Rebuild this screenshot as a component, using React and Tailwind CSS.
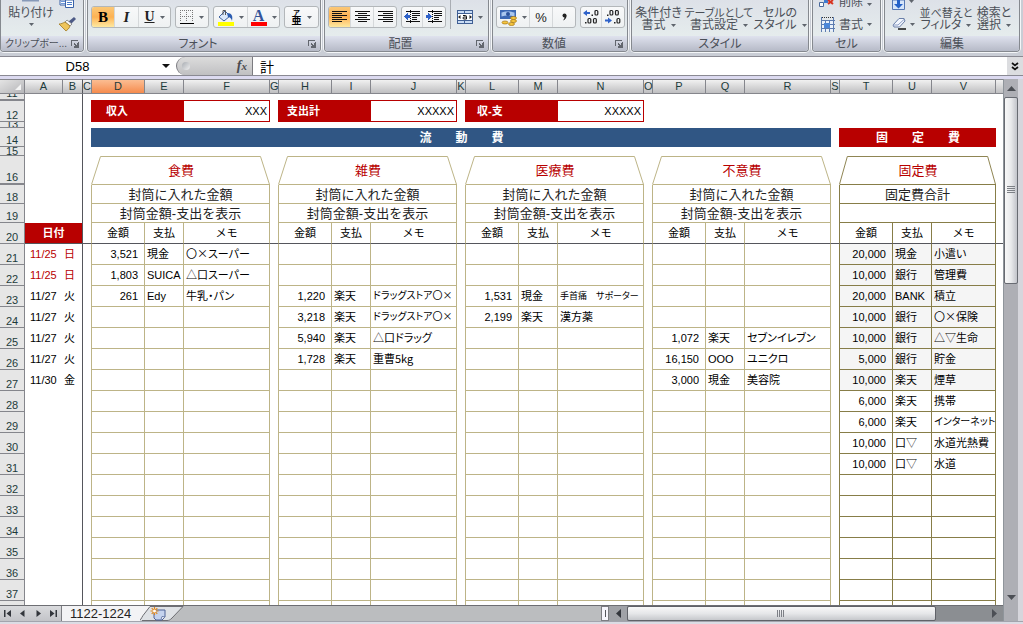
import React, { useState } from 'react';

const columns = [
  ['A', 'w-[38px]'], ['B', 'w-[20px]'], ['C', 'w-[9px]'],
  ['D', 'w-[53px]'], ['E', 'w-[39px]'], ['F', 'w-[86px]'], ['G', 'w-[9px]'],
  ['H', 'w-[53px]'], ['I', 'w-[39px]'], ['J', 'w-[86px]'], ['K', 'w-[9px]'],
  ['L', 'w-[53px]'], ['M', 'w-[39px]'], ['N', 'w-[86px]'], ['O', 'w-[9px]'],
  ['P', 'w-[53px]'], ['Q', 'w-[39px]'], ['R', 'w-[86px]'], ['S', 'w-[9px]'],
  ['T', 'w-[53px]'], ['U', 'w-[39px]'], ['V', 'w-[64px]'],
];

const groups = ['食費', '雑費', '医療費', '不意費', '固定費'];
const FIXED = 4;

const dates = {
  21: ['11/25', '日'], 22: ['11/25', '日'], 23: ['11/27', '火'], 24: ['11/27', '火'],
  25: ['11/27', '火'], 26: ['11/27', '火'], 27: ['11/30', '金'],
};

// one object per group, keyed by row number
const entries = [
  {
    21: ['3,521', '現金', '〇×スーパー'],
    22: ['1,803', 'SUICA', '△口スーパー'],
    23: ['261', 'Edy', '牛乳・パン'],
  },
  {
    23: ['1,220', '楽天', 'ドラッグストア〇×'],
    24: ['3,218', '楽天', 'ドラッグストア〇×'],
    25: ['5,940', '楽天', '△口ドラッグ'],
    26: ['1,728', '楽天', '重曹5kg'],
  },
  {
    23: ['1,531', '現金', '手首痛　サポーター'],
    24: ['2,199', '楽天', '漢方薬'],
  },
  {
    25: ['1,072', '楽天', 'セブンイレブン'],
    26: ['16,150', 'OOO', 'ユニクロ'],
    27: ['3,000', '現金', '美容院'],
  },
  {
    21: ['20,000', '現金', '小遣い'],
    22: ['10,000', '銀行', '管理費'],
    23: ['20,000', 'BANK', '積立'],
    24: ['10,000', '銀行', '〇×保険'],
    25: ['10,000', '銀行', '△▽生命'],
    26: ['5,000', '銀行', '貯金'],
    27: ['10,000', '楽天', '煙草'],
    28: ['6,000', '楽天', '携帯'],
    29: ['6,000', '楽天', 'インターネット'],
    30: ['10,000', '口▽', '水道光熱費'],
    31: ['10,000', '口▽', '水道'],
  },
];

const bodyRows = Array.from({ length: 18 }, (_, i) => 21 + i);

const lineColor = g => (g === FIXED ? 'border-[#877d48]' : 'border-[#bdb487]');

const memoSize = memo => {
  if (!memo) return 'text-[11px]';
  if (memo.startsWith('手首痛')) return 'text-[9px]';
  if (memo.startsWith('ドラッグ') || memo === 'インターネット') return 'text-[10px]';
  return 'text-[11px]';
};

function Caret() {
  return (
    <svg width="5" height="3" viewBox="0 0 5 3" className="shrink-0" aria-hidden="true">
      <path d="M0 0h5L2.5 3z" fill="#5f656d" />
    </svg>
  );
}

function RibbonGroup({ label, width, launcher, labelSize = 'text-[12px]', children }) {
  return (
    <section className={`${width} flex flex-col border border-t-0 border-[#85898f] rounded-b-[4px] overflow-hidden bg-linear-to-b from-[#dde1e8] to-[#e9f1ef] shadow-[0_0_0_1px_#f4f6f8]`}>
      <div className="h-[36px] flex items-start overflow-hidden">{children}</div>
      <div className="h-[15px] flex items-center bg-linear-to-b from-[#dfe2ee] to-[#b6bac7]">
        <span className={`flex-1 text-center leading-[14px] whitespace-nowrap ${labelSize}`}>{label}</span>
        {launcher && (
          <button type="button" aria-label={`${label} の詳細`} className="mr-[4px]">
            <svg width="8" height="8" viewBox="0 0 8 8" shapeRendering="crispEdges" className="block">
              <path d="M0.5 6V.5H7" fill="none" stroke="#62666e" />
              <path d="M3 3h1v1h1v1h1V3h1v4H3V6h1V5H3z" fill="#62666e" />
              <path d="M7 2h1v6H3V7h4z" fill="#62666e" />
            </svg>
          </button>
        )}
      </div>
    </section>
  );
}

function ButtonBox({ children }) {
  return (
    <div className="mt-[6px] h-[22px] flex border border-[#b3b7ba] rounded-[3px] bg-linear-to-b from-[#f8f9fa] to-[#eef1f2] overflow-hidden divide-x divide-[#d5d8da]">
      {children}
    </div>
  );
}

function RibbonButton({ label, width, active, drop, children }) {
  return (
    <button
      type="button"
      aria-label={label}
      className={`${width} h-full flex items-center justify-center gap-[5px] ${active ? 'bg-linear-to-b from-[#fbc877] via-[#fdb253] to-[#fee9a0]' : ''}`}
    >
      {children}
      {drop && <Caret />}
    </button>
  );
}

function LinesIcon({ rows }) {
  return (
    <svg width="15" height="13" viewBox="0 0 15 13" shapeRendering="crispEdges" aria-hidden="true">
      {rows.map(([x, w], i) => <rect key={i} x={x} y={i * 2} width={w} height="1" fill="#111" />)}
    </svg>
  );
}

function IndentIcon({ flip }) {
  return (
    <svg width="17" height="14" viewBox="0 0 17 14" shapeRendering="crispEdges" aria-hidden="true">
      <path d="M2 1h14M8 3h8M8 5h8M8 7h5M8 9h5M2 11h14" stroke="#111" transform="translate(0 .5)" />
      <path d="M6.500 0v14" stroke="#111" strokeDasharray="1 1" />
      {flip
        ? <path d="M0 5h2V3l4 3.500-4 3.500V8H0z" fill="#2f62c9" />
        : <path d="M6 5H4V3L0 6.500l4 3.500V8h2z" fill="#2f62c9" />}
    </svg>
  );
}

function DecimalIcon({ up }) {
  return (
    <svg width="17" height="16" viewBox="0 0 17 16" aria-hidden="true">
      <g fill="none" stroke="#222" strokeWidth="1.200">
        {up ? (
          <>
            <rect x="12" y="1.500" width="2.800" height="4.500" rx="1" />
            <rect x="5" y="9.500" width="2.800" height="4.500" rx="1" />
            <rect x="10.500" y="9.500" width="2.800" height="4.500" rx="1" />
          </>
        ) : (
          <>
            <rect x="5" y="1.500" width="2.800" height="4.500" rx="1" />
            <rect x="10.500" y="1.500" width="2.800" height="4.500" rx="1" />
            <rect x="12" y="9.500" width="2.800" height="4.500" rx="1" />
          </>
        )}
      </g>
      {up
        ? <path d="M8.500 5.500h1.500v1.500H8.500zM2 13h1.500v1.500H2z" fill="#222" />
        : <path d="M2 5.500h1.500v1.500H2zM9 13h1.500v1.500H9z" fill="#222" />}
      {up
        ? <path d="M0 4l4-3v2h3v2H4v2z" fill="#2f62c9" />
        : <path d="M7 11.500l-4-3v2H0v2h3v2z" fill="#2f62c9" />}
    </svg>
  );
}

function TextCommand({ top, bottom, width, topSize = 'text-[12px]' }) {
  return (
    <button type="button" className={`${width} mt-[7px] flex flex-col items-center text-[12px] leading-[12px] whitespace-nowrap`}>
      <span className={`leading-[12px] ${topSize}`}>{top}</span>
      <span className="flex items-center gap-[5px]">{bottom}<Caret /></span>
    </button>
  );
}

function Ribbon() {
  return (
    <header className="h-[56px] shrink-0 flex items-start gap-[3px] pr-[3px] bg-[#c9cdd5] text-[#4b5058] [font-feature-settings:'palt']">
      <RibbonGroup label="クリップボー..." width="w-[84px]" labelSize="text-[10px]" launcher>
        <button type="button" className="ml-[8px] w-[44px] flex flex-col items-center text-[12px] leading-[12px] whitespace-nowrap">
          <svg width="20" height="7" viewBox="0 0 20 7" aria-hidden="true">
            <path d="M1 0h17v1.500H1z" fill="#8799b8" />
          </svg>
          <span>貼り付け</span>
          <span className="mt-[4px]"><Caret /></span>
        </button>
        <div className="ml-[6px] flex flex-col gap-[8px]">
          <button type="button" aria-label="コピー">
            <svg width="16" height="9" viewBox="0 0 16 9" className="block">
              <path d="M1 0h8v5H1z" fill="#fff" stroke="#3b62a8" />
              <path d="M2 1.500h5M2 3.500h5" stroke="#6d96d8" />
              <path d="M6.500 0h8v7.500h-8z" fill="#fff" stroke="#3b62a8" />
              <path d="M8 2.500h5M8 4.500h5" stroke="#4a7bcb" />
            </svg>
          </button>
          <button type="button" aria-label="書式のコピー">
            <svg width="17" height="15" viewBox="0 0 17 15" className="block">
              <path d="M15 0l2 2-5 5-3-2z" fill="#4d5a86" />
              <path d="M8 3l5 4-2 2-5-4z" fill="#f6f6f6" stroke="#7d7d7d" strokeWidth=".8" />
              <path d="M6 5l5 4c-1 3-3 4-4 5L0 7c2 0 4-1 6-2z" fill="#eec55c" stroke="#a17a22" strokeWidth=".8" />
            </svg>
          </button>
        </div>
      </RibbonGroup>

      <RibbonGroup label="フォント" width="w-[234px]" launcher>
        <div className="ml-[3px] flex gap-[4px]">
          <ButtonBox>
            <RibbonButton label="太字" width="w-[23px]" active>
              <span className="font-['Liberation_Serif',serif] font-bold text-[15px] leading-none text-black">B</span>
            </RibbonButton>
            <RibbonButton label="斜体" width="w-[24px]">
              <span className="font-['Liberation_Serif',serif] font-bold italic text-[15px] leading-none text-[#222]">I</span>
            </RibbonButton>
            <RibbonButton label="下線" width="w-[31px]" drop>
              <span className="font-['Liberation_Serif',serif] font-bold underline text-[14px] leading-none text-[#222]">U</span>
            </RibbonButton>
          </ButtonBox>
          <ButtonBox>
            <RibbonButton label="罫線" width="w-[32px]" drop>
              <svg width="14" height="14" viewBox="0 0 14 14" shapeRendering="crispEdges">
                <path d="M0 .5h13M0 6.500h13M.5 0v12M6.500 0v12M12.500 0v12" stroke="#777" strokeDasharray="1 1" />
                <path d="M0 13.500h14" stroke="#000" />
              </svg>
            </RibbonButton>
          </ButtonBox>
          <ButtonBox>
            <RibbonButton label="塗りつぶしの色" width="w-[34px]" drop>
              <svg width="17" height="17" viewBox="0 0 17 17">
                <path d="M2 8l6-6 5 5-6 5z" fill="#dce9fa" stroke="#3f62a0" />
                <path d="M6 6V1.500h2.500V6" fill="none" stroke="#555" />
                <path d="M10 4c5 0 6 3 5 8-1-3-2-4-4-4z" fill="#2c5cb0" />
                <path d="M1 13h16v4H1z" fill="#ffff00" />
              </svg>
            </RibbonButton>
            <RibbonButton label="フォントの色" width="w-[31px]" drop>
              <span className="flex flex-col items-center">
                <span className="font-['Liberation_Serif',serif] font-bold text-[16px] leading-[13px] text-[#34549a]">A</span>
                <span className="w-[16px] h-[4px] bg-[#ff0000]" />
              </span>
            </RibbonButton>
          </ButtonBox>
          <ButtonBox>
            <RibbonButton label="ふりがな" width="w-[33px]" drop>
              <span className="flex flex-col items-center text-black">
                <span className="text-[7px] leading-[7px] font-bold">ア</span>
                <span className="text-[10px] leading-[10px] font-bold">亜</span>
              </span>
            </RibbonButton>
          </ButtonBox>
        </div>
      </RibbonGroup>

      <RibbonGroup label="配置" width="w-[165px]" launcher>
        <div className="ml-[3px] flex gap-[4px]">
          <ButtonBox>
            <RibbonButton label="左揃え" width="w-[22px]" active>
              <LinesIcon rows={[[0, 15], [0, 10], [0, 15], [0, 10], [0, 15], [0, 10]]} />
            </RibbonButton>
            <RibbonButton label="中央揃え" width="w-[23px]">
              <LinesIcon rows={[[0, 15], [3, 9], [0, 15], [3, 9], [0, 15], [3, 9]]} />
            </RibbonButton>
            <RibbonButton label="右揃え" width="w-[22px]">
              <LinesIcon rows={[[0, 15], [5, 10], [0, 15], [5, 10], [0, 15], [5, 10]]} />
            </RibbonButton>
          </ButtonBox>
          <ButtonBox>
            <RibbonButton label="インデントを減らす" width="w-[21px]"><IndentIcon /></RibbonButton>
            <RibbonButton label="インデントを増やす" width="w-[22px]"><IndentIcon flip /></RibbonButton>
          </ButtonBox>
          <span className="w-px h-[29px] bg-[#a9adb3]" />
          <div className="mt-[6px] h-[22px]">
            <RibbonButton label="セルを結合" width="w-[30px]" drop>
              <svg width="16" height="16" viewBox="0 0 16 16">
                <path d="M0 1h16v14H0z" fill="#3f5f94" />
                <path d="M1 2h6v2H1zM8 2h7v2H8zM1 12h6v2H1zM8 12h7v2H8z" fill="#c9dcf4" />
                <path d="M1 5h14v6H1z" fill="#fff" />
                <path d="M1 8l2.500-2v4zM15 8l-2.500-2v4z" fill="#222" />
                <path d="M6 6.500h2.500q1 0 1 1V10M9.500 8H7q-1 0-1 1t1 1h2.500" fill="none" stroke="#111" />
              </svg>
            </RibbonButton>
          </div>
        </div>
      </RibbonGroup>

      <RibbonGroup label="数値" width="w-[136px]" launcher>
        <div className="ml-[3px] flex gap-[4px]">
          <ButtonBox>
            <RibbonButton label="通貨表示形式" width="w-[33px]" drop>
              <svg width="17" height="17" viewBox="0 0 17 17">
                <path d="M0 1h16v9H0z" fill="#3c68b4" />
                <path d="M1.500 3.500c3-1.500 9-1.500 13 0v4c-4-1.500-9-1.500-13 0z" fill="#a9c6ee" />
                <circle cx="8" cy="5" r="2" fill="#2b529b" />
                <ellipse cx="13.500" cy="9" rx="3" ry="1.500" fill="#f5c640" stroke="#a3720e" strokeWidth=".7" />
                <ellipse cx="13.500" cy="12" rx="3" ry="1.500" fill="#f5c640" stroke="#a3720e" strokeWidth=".7" />
                <ellipse cx="11.500" cy="15" rx="3" ry="1.500" fill="#f5c640" stroke="#a3720e" strokeWidth=".7" />
                <ellipse cx="5" cy="13.500" rx="3" ry="1.500" fill="#f5c640" stroke="#a3720e" strokeWidth=".7" />
              </svg>
            </RibbonButton>
            <RibbonButton label="パーセント" width="w-[23px]">
              <span className="font-['Liberation_Sans',sans-serif] text-[13px] leading-none text-[#222]">%</span>
            </RibbonButton>
            <RibbonButton label="桁区切り" width="w-[22px]">
              <svg width="5" height="8" viewBox="0 0 5 8">
                <circle cx="2.500" cy="2.500" r="2" fill="#222" />
                <path d="M4.500 2.500c0 2.500-1 4-3.500 5 1-1.500 1.500-2 1.500-3.500z" fill="#222" />
              </svg>
            </RibbonButton>
          </ButtonBox>
          <ButtonBox>
            <RibbonButton label="小数点以下の表示桁数を増やす" width="w-[21px]"><DecimalIcon up /></RibbonButton>
            <RibbonButton label="小数点以下の表示桁数を減らす" width="w-[22px]"><DecimalIcon /></RibbonButton>
          </ButtonBox>
        </div>
      </RibbonGroup>

      <RibbonGroup label="スタイル" width="w-[178px]">
        <div className="ml-[3px] flex gap-[4px]">
          <TextCommand top="条件付き" bottom="書式" width="w-[47px]" />
          <TextCommand top="テーブルとして" bottom="書式設定" width="w-[66px]" topSize="text-[11px]" />
          <TextCommand top="セルの" bottom="スタイル" width="w-[48px]" />
        </div>
      </RibbonGroup>

      <RibbonGroup label="セル" width="w-[69px]">
        <div className="ml-[6px] flex flex-col text-[12px] leading-[12px]">
          <button type="button" className="flex items-center gap-[4px] h-[8px]">
            <svg width="16" height="8" viewBox="0 0 16 8" className="shrink-0">
              <path d="M.5 2.500h4v4h-4z" fill="#fff" stroke="#4b6a9c" />
              <path d="M5 0h4v3H5z" fill="#3f7bd0" />
              <path d="M9 0l5 4M14 0L9 4" stroke="#d8331f" strokeWidth="2" />
            </svg>
            <span className="-mt-[4px]">削除</span>
            <Caret />
          </button>
          <button type="button" className="mt-[9px] flex items-center gap-[4px]">
            <svg width="16" height="15" viewBox="0 0 16 15" shapeRendering="crispEdges" className="shrink-0">
              <path d="M2 3h13v11H2z" fill="#e9f1fb" />
              <path d="M2 3.500h14M2 7.500h14M2 11.500h14M2.500 0v15M6.500 3v12M10.500 3v12M14.500 0v15" stroke="#5c7cb0" />
              <path d="M5 6h6v5H5z" fill="#4b86d8" />
              <path d="M3 .5h11" stroke="#333" strokeDasharray="1 1" />
            </svg>
            <span>書式</span>
            <Caret />
          </button>
        </div>
      </RibbonGroup>

      <RibbonGroup label="編集" width="flex-1">
        <div className="ml-[7px] w-[26px] flex flex-col">
          <button type="button" aria-label="フィル" className="flex items-start gap-[4px]">
            <svg width="13" height="10" viewBox="0 0 13 10">
              <path d="M.5 0h12v9.500H.5z" fill="#d6e5fa" stroke="#5577b3" />
              <path d="M5 0h3v4h3L6.500 8.500 2 4h3z" fill="#2461c8" />
            </svg>
            <Caret />
          </button>
          <button type="button" aria-label="クリア" className="mt-[8px] flex items-center gap-[4px]">
            <svg width="14" height="12" viewBox="0 0 14 12">
              <path d="M1 7l6-6.500h5L13 3 7.500 9H2z" fill="#f2f6fd" stroke="#6a7fa8" />
              <path d="M1 7h5l6.500-6" fill="none" stroke="#8b9dc4" />
              <path d="M6 11h8" stroke="#111" strokeWidth="1.500" />
            </svg>
            <Caret />
          </button>
        </div>
        <TextCommand top="並べ替えと" bottom="フィルタ" width="w-[56px]" topSize="text-[11px]" />
        <TextCommand top="検索と" bottom="選択" width="w-[40px]" />
      </RibbonGroup>
    </header>
  );
}

function FormulaBar() {
  const [formula, setFormula] = useState('計');
  const [cell, setCell] = useState('D58');

  return (
    <div className="h-[20px] shrink-0 flex items-stretch bg-white border-y border-[#8a8a93]">
      <input
        aria-label="名前ボックス"
        value={cell}
        onChange={e => setCell(e.target.value)}
        className="w-[155px] text-center text-[13px] leading-none outline-none"
      />
      <button type="button" aria-label="名前の一覧" className="w-[21px] pl-[7px]">
        <svg width="8" height="4" viewBox="0 0 8 4" className="block"><path d="M0 0h8L4 4z" fill="#111" /></svg>
      </button>
      <div className="w-[77px] flex items-center justify-between rounded-l-full border-l border-r border-[#7b7b80] bg-linear-to-b from-[#dcdcdc] to-[#c0c0c2] pl-[5px] pr-[5px]">
        <span className="size-[8px] rounded-full bg-linear-to-br from-[#a9adb3] to-[#f0f0f0]" />
        <button type="button" aria-label="関数の挿入" className="font-['Liberation_Serif',serif] italic font-bold text-[14px] leading-none text-[#4b4b50]">
          f<span className="text-[11px]">x</span>
        </button>
      </div>
      <input
        aria-label="数式バー"
        value={formula}
        onChange={e => setFormula(e.target.value)}
        className="flex-1 min-w-0 pl-[7px] text-[14px] leading-none outline-none"
      />
      <button type="button" aria-label="数式バーの展開" className="w-[16px] flex items-center justify-center bg-[#dcdde0]">
        <svg width="8" height="9" viewBox="0 0 8 9"><path d="M1 1l3 2.500L7 1M1 5l3 2.500L7 5" fill="none" stroke="#111" strokeWidth="1.700" /></svg>
      </button>
    </div>
  );
}

function RowHead({ children, edge = 'border-b' }) {
  return (
    <th scope="row" className={`${edge} border-r border-[#85868c] bg-[#e6e6e6] align-bottom text-[11px] font-normal text-[#1d3b3b]`}>
      {children}
    </th>
  );
}

function Blank({ span = 1 }) {
  return <td colSpan={span} />;
}

function DateBlank() {
  return <td colSpan={2} className="border-r border-[#55565c]" />;
}

function Total({ label, indent, value }) {
  return (
    <>
      <td className="border-r border-[#b80000]" />
      <th colSpan={2} scope="row" className={`${indent} bg-[#b80000] text-left text-[11px] font-bold text-white`}>{label}</th>
      <td className="border border-l-0 border-[#b80000] pr-[2px] text-right">{value}</td>
    </>
  );
}

function Flap({ name, fixed }) {
  return (
    <td colSpan={3} className={`relative border-b text-center text-[13px] text-[#b80000] ${fixed ? 'border-[#877d48]' : 'border-[#bdb487]'}`}>
      <svg viewBox="0 0 179 29" preserveAspectRatio="none" className="absolute -left-px top-0 w-[calc(100%+1px)] h-[29px]" aria-hidden="true">
        <path d="M.5 28.500L9.500 .5h160l9 28" fill="none" stroke={fixed ? '#877d48' : '#bdb487'} />
      </svg>
      {name}
    </td>
  );
}

function GroupCells({ g, row }) {
  const [amount, pay, memo] = entries[g][row] || [];
  const cell = `border-r border-b ${lineColor(g)} ${g === FIXED && row <= 27 ? 'bg-[#f5f5f5]' : ''}`;

  return (
    <>
      <td className={`border-r ${lineColor(g)}`} />
      <td className={`${cell} pr-[6px] text-right`}>{amount}</td>
      <td className={`${cell} pl-[2px] whitespace-nowrap`}>{pay}</td>
      <td className={`${cell} pl-[2px] pb-[2px] whitespace-nowrap overflow-hidden font-['Noto_Sans_CJK_JP',sans-serif] [font-feature-settings:'palt'] ${memoSize(memo)}`}>{memo}</td>
    </>
  );
}

function Sheet() {
  return (
    <div className="flex-1 min-w-0 overflow-hidden bg-white">
      <table className="w-full table-fixed border-separate border-spacing-0 text-[11px] leading-none text-black">
        <colgroup>
          <col className="w-[25px]" />
          {columns.map(([name, width]) => <col key={name} className={width} />)}
          <col />
        </colgroup>
        <thead>
          <tr className="h-[15px]">
            <th className="border-y border-r border-[#85868c] bg-linear-to-br from-[#e4e4e4] to-[#b5b5b8]">
              <svg width="6" height="6" viewBox="0 0 6 6" className="ml-auto mr-[3px]"><path d="M6 0v6H0z" fill="#f4f4f4" /></svg>
            </th>
            {columns.map(([name]) => (
              <th
                key={name}
                scope="col"
                className={`border-y border-r font-normal text-[#1d3b3b] bg-linear-to-b ${name === 'B' ? 'border-y-[#85868c] border-r-[#55565c]' : 'border-[#85868c]'} ${name === 'D' ? 'from-[#fbbd92] to-[#f58b4c]' : 'from-[#f1f1f1] to-[#bfbfc1]'}`}
              >
                {name}
              </th>
            ))}
            <th className="border-y border-[#85868c] bg-linear-to-b from-[#f1f1f1] to-[#bfbfc1]" />
          </tr>
        </thead>
        <tbody>
          <tr className="h-[6px]">
            <RowHead><div className="h-[5px] flex items-end justify-center overflow-hidden">11</div></RowHead>
            <DateBlank />
            <Blank span={21} />
          </tr>
          <tr className="h-[22px]">
            <RowHead edge="border-y">12</RowHead>
            <DateBlank />
            <Total label="収入" indent="pl-[14px]" value="XXX" />
            <Total label="支出計" indent="pl-[8px]" value="XXXXX" />
            <Total label="収-支" indent="pl-[11px]" value="XXXXX" />
            <Blank span={9} />
          </tr>
          <tr className="h-[6px]">
            <RowHead><div className="h-[5px] flex items-center justify-center overflow-hidden">13</div></RowHead>
            <DateBlank />
            <Blank span={21} />
          </tr>
          <tr className="h-[19px] text-[12px] text-white">
            <RowHead>14</RowHead>
            <DateBlank />
            <td className="border-r border-[#305684]" />
            <th colSpan={15} className="bg-[#305684]">流　　動　　費</th>
            <td className="border-r border-[#b80000]" />
            <th colSpan={3} className="bg-[#b80000]">固　　定　　費</th>
            <Blank />
          </tr>
          <tr className="h-[9px]">
            <RowHead><div className="h-[8px] flex items-center justify-center overflow-hidden">15</div></RowHead>
            <DateBlank />
            <Blank span={21} />
          </tr>
          <tr className="h-[29px]">
            <RowHead edge="border-b-2">16</RowHead>
            <DateBlank />
            {groups.map((name, g) => (
              <React.Fragment key={name}>
                <Blank />
                <Flap name={name} fixed={g === FIXED} />
              </React.Fragment>
            ))}
            <Blank />
          </tr>
          <tr className="h-[19px] text-[13px] text-[#222]">
            <RowHead>18</RowHead>
            <DateBlank />
            {groups.map((name, g) => (
              <React.Fragment key={name}>
                <td className={`border-r ${lineColor(g)}`} />
                <td colSpan={3} className={`border-r border-b text-center whitespace-nowrap ${lineColor(g)}`}>
                  {g === FIXED ? '固定費合計' : '封筒に入れた金額'}
                </td>
              </React.Fragment>
            ))}
            <Blank />
          </tr>
          <tr className="h-[19px] text-[13px] text-[#222]">
            <RowHead>19</RowHead>
            <DateBlank />
            {groups.map((name, g) => (
              <React.Fragment key={name}>
                <td className={`border-r ${lineColor(g)}`} />
                <td colSpan={3} className={`border-r border-b text-center whitespace-nowrap ${lineColor(g)}`}>
                  {g === FIXED ? '' : '封筒金額-支出を表示'}
                </td>
              </React.Fragment>
            ))}
            <Blank />
          </tr>
          <tr className="h-[21px]">
            <RowHead>20</RowHead>
            <th colSpan={2} className="border-r border-b border-[#55565c] bg-[#b80000] text-[11px] text-white">日付</th>
            {groups.map((name, g) => {
              const side = g === FIXED ? 'border-r-[#877d48]' : 'border-r-[#bdb487]';
              return (
                <React.Fragment key={name}>
                  <td className={`border-r border-b border-b-[#55565c] ${side}`} />
                  {['金額', '支払', 'メモ'].map(t => (
                    <th key={t} scope="col" className={`border-r border-b border-b-[#55565c] font-normal ${side}`}>{t}</th>
                  ))}
                </React.Fragment>
              );
            })}
            <td className="border-b border-[#55565c]" />
          </tr>
          {bodyRows.map(row => {
            const [date, day] = dates[row] || [];
            const color = day === '日' ? 'text-[#b80000]' : '';
            return (
              <tr key={row} className="h-[21px]">
                <RowHead>{row}</RowHead>
                <td className={`pl-[5px] whitespace-nowrap ${color}`}>{date}</td>
                <td className={`border-r border-[#55565c] pl-[1px] ${color}`}>{day}</td>
                {groups.map((name, g) => <GroupCells key={name} g={g} row={row} />)}
                <Blank />
              </tr>
            );
          })}
        </tbody>
      </table>
    </div>
  );
}

function VerticalScroll() {
  return (
    <div className="w-[15px] shrink-0 flex flex-col bg-[#aeafb5] border-l border-[#8f959b]">
      <button type="button" aria-label="上へ" className="h-[18px] flex items-center justify-center">
        <svg width="9" height="5" viewBox="0 0 9 5"><path d="M4.500 0L9 5H0z" fill="#4c4f55" /></svg>
      </button>
      <div className="flex-1 min-h-0">
        <div className="h-[38%] flex items-center justify-center rounded-[2px] border border-[#686b72] bg-linear-to-r from-[#f8f8f8] via-[#e9eaec] to-[#c2c4ca]">
          <svg width="8" height="8" viewBox="0 0 8 8" shapeRendering="crispEdges"><path d="M0 .5h8M0 2.500h8M0 4.500h8M0 6.500h8" stroke="#7d8086" /></svg>
        </div>
      </div>
      <button type="button" aria-label="下へ" className="h-[16px] mb-[16px] flex items-center justify-center">
        <svg width="9" height="5" viewBox="0 0 9 5"><path d="M0 0h9L4.500 5z" fill="#4c4f55" /></svg>
      </button>
    </div>
  );
}

const navIcons = [
  ['最初のシート', 'M0 0h1.500v7H0zM7 0v7L2.500 3.500z'],
  ['前のシート', 'M5.500 0v7L1 3.500z'],
  ['次のシート', 'M1.500 0v7L6 3.500z'],
  ['最後のシート', 'M0 0v7l4.500-3.500zM5.500 0H7v7H5.500z'],
];

function SheetTabs() {
  return (
    <div className="h-[16px] shrink-0 flex border-t border-[#6d6e73] bg-[#bbbdbf]">
      <div className="w-[62px] flex items-center justify-around border-r border-[#7c7d82] bg-linear-to-b from-[#d9dadd] to-[#c3c4c8]">
        {navIcons.map(([label, d]) => (
          <button key={label} type="button" aria-label={label}>
            <svg width="7" height="7" viewBox="0 0 7 7" className="block"><path d={d} fill="#33363c" /></svg>
          </button>
        ))}
      </div>
      <button type="button" className="w-[78px] pl-[8px] text-left text-[13px] leading-[15px] whitespace-nowrap text-[#222] bg-[#f3f3f5]">
        1122-1224
      </button>
      <button type="button" aria-label="ワークシートの挿入">
        <svg width="44" height="15" viewBox="0 0 44 15" className="block">
          <path d="M0 0h11L0 14z" fill="#f3f3f5" />
          <path d="M-2 14.500c3 0 3-2 5-5L10 .5h33L32 12c-2 2-3 2.500-5 2.500H2" fill="#dfe2e6" stroke="#6d6e73" />
          <path d="M14 4h11v7l-3 3h-6l-2-2z" fill="#c5d3ee" stroke="#4e6296" />
          <path d="M21 13.500l1-3 3 .500" fill="#fff" stroke="#4e6296" strokeWidth=".8" />
          <path d="M14.500 1v8M10.500 5h8M11.700 2.200l5.600 5.600M17.300 2.200l-5.600 5.600" stroke="#e0871c" strokeWidth="1.200" />
          <circle cx="14.500" cy="5" r="1.500" fill="#fff" />
        </svg>
      </button>
      <div className="flex-1" />
      <span className="w-[8px] border border-[#7c7d82] bg-[#f6f5fc] flex items-center justify-center"><span className="w-px h-[7px] bg-[#55565c]" /></span>
      <div className="w-[394px] flex items-stretch bg-[#8b8e92]">
        <button type="button" aria-label="左へ" className="w-[18px] flex items-center justify-center bg-[#a0a2a7]">
          <svg width="5" height="9" viewBox="0 0 5 9"><path d="M5 0v9L0 4.500z" fill="#33363c" /></svg>
        </button>
        <div className="flex-1">
          <div className="h-full w-[86%] flex items-center justify-center rounded-[2px] border border-[#606268] bg-linear-to-b from-[#f8f8f8] via-[#e6e7e9] to-[#c6c8cc]">
            <svg width="8" height="7" viewBox="0 0 8 7" shapeRendering="crispEdges"><path d="M.5 0v7M2.500 0v7M4.500 0v7M6.500 0v7" stroke="#7d8086" /></svg>
          </div>
        </div>
        <button type="button" aria-label="右へ" className="w-[17px] flex items-center justify-center">
          <svg width="5" height="9" viewBox="0 0 5 9"><path d="M0 0v9l5-4.500z" fill="#4c4f55" /></svg>
        </button>
      </div>
    </div>
  );
}

export default function App() {
  return (
    <div className="h-screen flex flex-col overflow-hidden bg-[#d6d6dc] font-['Liberation_Sans','Noto_Sans_CJK_JP',sans-serif]">
      <Ribbon />
      <FormulaBar />
      <div className="h-[3px] shrink-0 bg-[#dcdaf0]" />
      <main className="flex-1 min-h-0 flex pr-[5px]">
        <div className="flex-1 min-w-0 flex flex-col">
          <div className="flex-1 min-h-0 flex">
            <Sheet />
          </div>
          <SheetTabs />
        </div>
        <VerticalScroll />
      </main>
      <footer className="h-[3px] shrink-0 border-t border-[#a3a4ad] bg-[#dcdce4]" />
    </div>
  );
}
